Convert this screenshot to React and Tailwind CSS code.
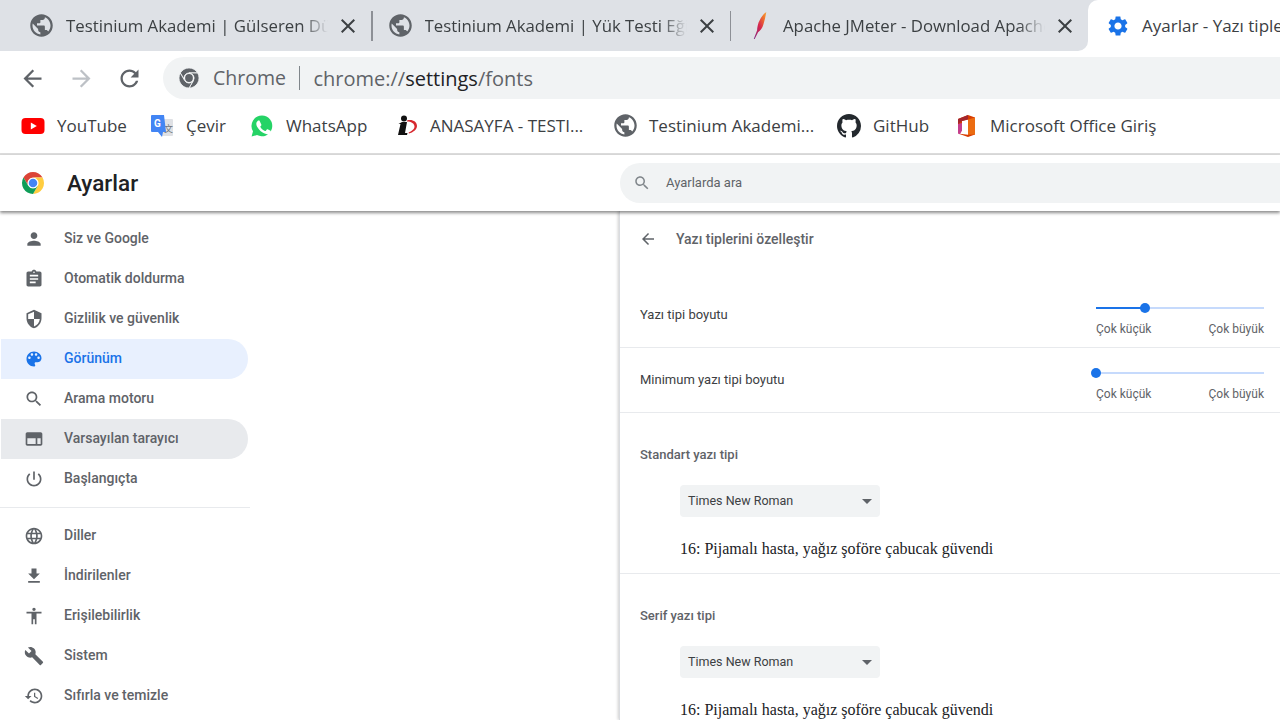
import React from "react";

const ICONS = {
    person: "M12 12c2.21 0 4-1.79 4-4s-1.79-4-4-4-4 1.79-4 4 1.79 4 4 4zm0 2c-2.67 0-8 1.34-8 4v2h16v-2c0-2.66-5.33-4-8-4z",
    assignment: "M19 3h-4.18C14.4 1.84 13.3 1 12 1c-1.3 0-2.4.84-2.82 2H5c-1.1 0-2 .9-2 2v14c0 1.1.9 2 2 2h14c1.1 0 2-.9 2-2V5c0-1.1-.9-2-2-2zm-7 0c.55 0 1 .45 1 1s-.45 1-1 1-1-.45-1-1 .45-1 1-1zm2 14H7v-2h7v2zm3-4H7v-2h10v2zm0-4H7V7h10v2z",
    security: "M12 1L3 5v6c0 5.55 3.84 10.74 9 12 5.16-1.26 9-6.45 9-12V5l-9-4zm0 10.99h7c-.53 4.12-3.28 7.79-7 8.94V12H5V6.3l7-3.11v8.8z",
    palette: "M12 3c-4.97 0-9 4.03-9 9s4.03 9 9 9c.83 0 1.5-.67 1.5-1.5 0-.39-.15-.74-.39-1.01-.23-.26-.38-.61-.38-.99 0-.83.67-1.5 1.5-1.5H16c2.76 0 5-2.24 5-5 0-4.42-4.03-8-9-8zm-5.5 9c-.83 0-1.5-.67-1.5-1.5S5.67 9 6.5 9 8 9.67 8 10.5 7.33 12 6.5 12zm3-4C8.67 8 8 7.33 8 6.5S8.67 5 9.5 5s1.5.67 1.5 1.5S10.33 8 9.5 8zm5 0c-.83 0-1.5-.67-1.5-1.5S13.67 5 14.5 5s1.5.67 1.5 1.5S15.33 8 14.5 8zm3 4c-.83 0-1.5-.67-1.5-1.5S16.67 9 17.5 9s1.5.67 1.5 1.5-.67 1.5-1.5 1.5z",
    search: "M15.5 14h-.79l-.28-.27C15.41 12.59 16 11.11 16 9.5 16 5.91 13.09 3 9.5 3S3 5.91 3 9.5 5.91 16 9.5 16c1.61 0 3.09-.59 4.23-1.57l.27.28v.79l5 4.99L20.49 19l-4.99-5zm-6 0C7.01 14 5 11.99 5 9.5S7.01 5 9.5 5 14 7.01 14 9.5 11.99 14 9.5 14z",
    web: "M20 4H4c-1.1 0-2 .9-2 2v12c0 1.1.9 2 2 2h16c1.1 0 2-.9 2-2V6c0-1.1-.9-2-2-2zM4 18v-7h10v7H4zm16 0h-4v-7h4v7z",
    power: "M13 3h-2v10h2V3zm4.83 2.17l-1.42 1.42C17.99 7.86 19 9.81 19 12c0 3.87-3.13 7-7 7s-7-3.13-7-7c0-2.19 1.01-4.14 2.58-5.42L6.17 5.17C4.23 6.82 3 9.26 3 12c0 4.97 4.03 9 9 9s9-4.03 9-9c0-2.74-1.23-5.18-3.17-6.83z",
    language: "M11.99 2C6.47 2 2 6.48 2 12s4.47 10 9.99 10C17.52 22 22 17.52 22 12S17.52 2 11.99 2zm6.93 6h-2.95c-.32-1.25-.78-2.45-1.38-3.56 1.84.63 3.37 1.91 4.33 3.56zM12 4.04c.83 1.2 1.48 2.53 1.91 3.96h-3.82c.43-1.43 1.08-2.76 1.91-3.96zM4.26 14C4.1 13.36 4 12.69 4 12s.1-1.36.26-2h3.38c-.08.66-.14 1.32-.14 2 0 .68.06 1.34.14 2H4.26zm.82 2h2.95c.32 1.25.78 2.45 1.38 3.56-1.84-.63-3.37-1.9-4.33-3.56zm2.95-8H5.08c.96-1.66 2.49-2.93 4.33-3.56C8.81 5.55 8.35 6.75 8.03 8zM12 19.96c-.83-1.2-1.48-2.53-1.91-3.96h3.82c-.43 1.43-1.08 2.76-1.91 3.96zM14.34 14H9.66c-.09-.66-.16-1.32-.16-2 0-.68.07-1.35.16-2h4.68c.09.65.16 1.32.16 2 0 .68-.07 1.34-.16 2zm.25 5.56c.6-1.11 1.06-2.31 1.38-3.56h2.95c-.96 1.65-2.49 2.93-4.33 3.56zM16.36 14c.08-.66.14-1.32.14-2 0-.68-.06-1.34-.14-2h3.38c.16.64.26 1.31.26 2s-.1 1.36-.26 2h-3.38z",
    download: "M19 9h-4V3H9v6H5l7 7 7-7zM5 18v2h14v-2H5z",
    accessibility: "M12 2c1.1 0 2 .9 2 2s-.9 2-2 2-2-.9-2-2 .9-2 2-2zm9 7h-6v13h-2v-6h-2v6H9V9H3V7h18v2z",
    build: "M22.7 19l-9.1-9.1c.9-2.3.4-5-1.5-6.9-2-2-5-2.4-7.4-1.3L9 6 6 9 1.6 4.7C.4 7.1.9 10.1 2.9 12.1c1.9 1.9 4.6 2.4 6.9 1.5l9.1 9.1c.4.4 1 .4 1.4 0l2.3-2.3c.5-.4.5-1.1.1-1.4z",
    restore: "M13 3c-4.97 0-9 4.03-9 9H1l3.89 3.89.07.14L9 12H6c0-3.87 3.13-7 7-7s7 3.13 7 7-3.13 7-7 7c-1.93 0-3.68-.79-4.94-2.06l-1.42 1.42C8.27 19.99 10.51 21 13 21c4.97 0 9-4.03 9-9s-4.03-9-9-9zm-1 5v5l4.28 2.54.72-1.21-3.5-2.08V8H12z",
    back: "M20 11H7.83l5.59-5.59L12 4l-8 8 8 8 1.41-1.41L7.83 13H20v-2z",
    forward: "M4 13h12.17l-5.59 5.59L12 20l8-8-8-8-1.41 1.41L16.17 11H4v2z",
    reload: "M17.65 6.35C16.2 4.9 14.21 4 12 4c-4.42 0-7.99 3.58-7.99 8s3.57 8 7.99 8c3.73 0 6.84-2.55 7.73-6h-2.08c-.82 2.33-3.04 4-5.65 4-3.31 0-6-2.69-6-6s2.69-6 6-6c1.66 0 3.14.69 4.22 1.78L13 11h7V4l-2.35 2.35z",
    close: "M19 6.41L17.59 5 12 10.59 6.41 5 5 6.41 10.59 12 5 17.59 6.41 19 12 13.41 17.59 19 19 17.59 13.41 12z",
    gear: "M19.14 12.94c.04-.3.06-.61.06-.94 0-.32-.02-.64-.07-.94l2.03-1.58c.18-.14.23-.41.12-.61l-1.92-3.32c-.12-.22-.37-.29-.59-.22l-2.39.96c-.5-.38-1.03-.7-1.62-.94l-.36-2.54c-.04-.24-.24-.41-.48-.41h-3.84c-.24 0-.43.17-.47.41l-.36 2.54c-.59.24-1.13.57-1.62.94l-2.39-.96c-.22-.08-.47 0-.59.22L2.74 8.87c-.12.21-.08.47.12.61l2.03 1.58c-.05.3-.09.63-.09.94s.02.64.07.94l-2.03 1.58c-.18.14-.23.41-.12.61l1.92 3.32c.12.22.37.29.59.22l2.39-.96c.5.38 1.03.7 1.62.94l.36 2.54c.05.24.24.41.48.41h3.84c.24 0 .44-.17.47-.41l.36-2.54c.59-.24 1.13-.56 1.62-.94l2.39.96c.22.08.47 0 .59-.22l1.92-3.32c.12-.22.07-.47-.12-.61l-2.01-1.58zM12 15.6c-1.98 0-3.6-1.62-3.6-3.6s1.62-3.6 3.6-3.6 3.6 1.62 3.6 3.6-1.62 3.6-3.6 3.6z",
    globe: "M12 2C6.48 2 2 6.48 2 12s4.48 10 10 10 10-4.48 10-10S17.52 2 12 2zm-1 17.93c-3.95-.49-7-3.85-7-7.93 0-.62.08-1.21.21-1.79L9 15v1c0 1.1.9 2 2 2v1.93zm6.9-2.54c-.26-.81-1-1.39-1.9-1.39h-1v-3c0-.55-.45-1-1-1H8v-2h2c.55 0 1-.45 1-1V7h2c1.1 0 2-.9 2-2v-.41c2.93 1.19 5 4.06 5 7.41 0 2.08-.8 3.97-2.1 5.39z",
};

const MatIcon = ({ name, className }) => (
    <svg viewBox="0 0 24 24" className={className} fill="currentColor">
        <path d={ICONS[name]} />
    </svg>
);

// Chrome logo, colored or flat gray for the omnibox
const ChromeLogo = ({ className, gray }) => {
    const stroke = gray ? "#f1f3f4" : "none";
    return (
        <svg viewBox="0 0 48 48" className={className}>
            <circle cx="24" cy="24" r="12" fill="#fff" />
            <path d="M4.95 13A22 22 0 0 1 43.05 13H24A11 11 0 0 0 14.47 29.5z" fill={gray ? "#5f6368" : "#db4437"} stroke={stroke} strokeWidth="2" />
            <path d="M43.05 13A22 22 0 0 1 24 46L33.53 29.5A11 11 0 0 0 24 13z" fill={gray ? "#5f6368" : "#ffcd40"} stroke={stroke} strokeWidth="2" />
            <path d="M24 46A22 22 0 0 1 4.95 13L14.47 29.5A11 11 0 0 0 33.53 29.5z" fill={gray ? "#5f6368" : "#0f9d58"} stroke={stroke} strokeWidth="2" />
            <circle cx="24" cy="24" r="8.5" fill={gray ? "#5f6368" : "#4285f4"} />
        </svg>
    );
};

const Feather = ({ className }) => (
    <svg viewBox="0 0 24 28" className={className}>
        <defs>
            <linearGradient id="feather" x1="0" y1="1" x2="1" y2="0">
                <stop offset="0" stopColor="#7b2b86" />
                <stop offset="0.45" stopColor="#d4234f" />
                <stop offset="0.8" stopColor="#f0762c" />
                <stop offset="1" stopColor="#f5a83a" />
            </linearGradient>
        </defs>
        <path d="M18 0c-3 2-6 6-8 11-1 3-1.500 6-1.500 8L5 28l.8.3 3.700-7.300c2.500-1.500 4.500-4.500 5.500-8 1-3.500 2.500-9 3-13z" fill="url(#feather)" />
    </svg>
);

const YouTubeIcon = () => (
    <svg viewBox="0 0 24 24" className="w-[24px] h-[24px] shrink-0">
        <rect x="0.5" y="4" width="23" height="16" rx="4" fill="#f00" />
        <path d="M9.8 8.6l6 3.4-6 3.4z" fill="#fff" />
    </svg>
);

const TranslateIcon = () => (
    <svg viewBox="0 0 24 24" className="w-[24px] h-[24px] shrink-0">
        <rect x="11" y="5" width="12" height="17" rx="1" fill="#dfe1e5" />
        <text x="14" y="18" fontSize="9" fill="#70757a" fontFamily="'Noto Sans CJK SC', sans-serif">文</text>
        <path d="M2 1h12l2 17h-3l-1 5-4-5H2a1 1 0 0 1-1-1V2a1 1 0 0 1 1-1z" fill="#4285f4" />
        <text x="4" y="13" fontSize="10" fontWeight="700" fill="#fff" fontFamily="Roboto, sans-serif">G</text>
    </svg>
);

const WhatsAppIcon = () => (
    <svg viewBox="0 0 24 24" className="w-[24px] h-[24px] shrink-0">
        <path d="M12 1.5A10.4 10.4 0 0 0 3 17.2L1.6 22.5l5.4-1.4A10.4 10.4 0 1 0 12 1.5z" fill="#25d366" />
        <path d="M8.6 6.6c-.3 0-.7.1-1 .5-.4.4-1.300 1.300-1.300 3s1.300 3.500 1.500 3.700c.2.300 2.500 4 6.200 5.400 3 1.200 3.600.9 4.300.9.600-.1 2-.8 2.300-1.600.3-.8.300-1.400.2-1.600-.1-.1-.3-.2-.7-.4l-2.500-1.200c-.3-.1-.6-.2-.8.200l-1.100 1.400c-.2.200-.4.300-.8.100-1.900-.9-3.200-1.700-4.500-3.900-.2-.4 0-.6.200-.8l.8-1c.1-.2.100-.4 0-.6L9.800 7.300c-.3-.7-.6-.7-.8-.7z" fill="#fff" />
    </svg>
);

const AnasayfaIcon = () => (
    <svg viewBox="0 0 24 24" className="w-[24px] h-[24px] shrink-0">
        <circle cx="10" cy="4.500" r="3" fill="#111" />
        <path d="M8 8h5l-2 11h2.500l-.5 2H4l2.500-11H4.500z" fill="#111" />
        <path d="M13 6.500c5-1.500 10 1 10 5.500 0 3.500-4 6.500-8 7.500l-.5-.8c3-1.500 6-3.500 6-6.200 0-3-3.500-5-7.500-5z" fill="#d7282f" />
    </svg>
);

const GitHubIcon = () => (
    <svg viewBox="0 0 16 16" className="w-[24px] h-[24px] shrink-0" fill="#24292e">
        <path d="M8 0C3.58 0 0 3.58 0 8c0 3.54 2.29 6.53 5.47 7.59.4.07.55-.17.55-.38 0-.19-.01-.82-.01-1.49-2.01.37-2.53-.49-2.69-.94-.09-.23-.48-.94-.82-1.13-.28-.15-.68-.52-.01-.53.63-.01 1.08.58 1.23.82.72 1.21 1.87.87 2.33.66.07-.52.28-.87.51-1.07-1.78-.2-3.64-.89-3.64-3.95 0-.87.31-1.59.82-2.15-.08-.2-.36-1.02.08-2.12 0 0 .67-.21 2.2.82.64-.18 1.32-.27 2-.27.68 0 1.36.09 2 .27 1.53-1.04 2.2-.82 2.2-.82.44 1.1.16 1.92.08 2.12.51.56.82 1.27.82 2.15 0 3.07-1.87 3.75-3.65 3.95.29.25.54.73.54 1.48 0 1.07-.01 1.93-.01 2.2 0 .21.15.46.55.38A8.013 8.013 0 0016 8c0-4.42-3.58-8-8-8z" />
    </svg>
);

const OfficeIcon = () => (
    <svg viewBox="0 0 24 24" className="w-[24px] h-[24px] shrink-0">
        <path d="M14 1l7 2.500v17L14 23l-10-3.500 10 1.200V5.500L8 7v9.500l-4 3V5z" fill="#d83b01" />
        <path d="M14 1L4 5v5l4-3 6-1.500z" fill="#a4262c" />
        <path d="M4 10v9.500l2 .7 2-3.700V9z" fill="#c43e8c" />
        <path d="M14 5.500v15.200l7-.2V3.500z" fill="#eb6c12" />
    </svg>
);

const GlobeIcon = () => <MatIcon name="globe" className="w-[27px] h-[27px] shrink-0 text-[#5f6368]" />;

const tabs = [
    { title: "Testinium Akademi | Gülseren Düzgün", icon: <GlobeIcon />, sep: true },
    { title: "Testinium Akademi | Yük Testi Eğitimi", icon: <GlobeIcon />, sep: true },
    { title: "Apache JMeter - Download Apache JMeter", icon: <Feather className="w-[27px] h-[27px] shrink-0 ml-[2px] -mr-[2px]" />, sep: false },
];

const bookmarks = [
    { label: "YouTube", icon: <YouTubeIcon />, width: "w-[129px]" },
    { label: "Çevir", icon: <TranslateIcon />, width: "w-[100px]" },
    { label: "WhatsApp", icon: <WhatsAppIcon />, width: "w-[144px]" },
    { label: "ANASAYFA - TESTI...", icon: <AnasayfaIcon />, width: "w-[219px]" },
    { label: "Testinium Akademi...", icon: <MatIcon name="globe" className="w-[27px] h-[27px] -mx-[1.5px] shrink-0 text-[#5f6368]" />, width: "w-[224px]" },
    { label: "GitHub", icon: <GitHubIcon />, width: "w-[117px]" },
    { label: "Microsoft Office Giriş", icon: <OfficeIcon />, width: "w-[220px]" },
];

const navTop = [
    { label: "Siz ve Google", icon: "person" },
    { label: "Otomatik doldurma", icon: "assignment" },
    { label: "Gizlilik ve güvenlik", icon: "security" },
    { label: "Görünüm", icon: "palette", selected: true },
    { label: "Arama motoru", icon: "search" },
    { label: "Varsayılan tarayıcı", icon: "web", hovered: true },
    { label: "Başlangıçta", icon: "power" },
];

const navBottom = [
    { label: "Diller", icon: "language" },
    { label: "İndirilenler", icon: "download" },
    { label: "Erişilebilirlik", icon: "accessibility" },
    { label: "Sistem", icon: "build" },
    { label: "Sıfırla ve temizle", icon: "restore" },
];

const Tab = ({ title, icon, sep }) => (
    <div className="w-[358.5px] shrink-0 h-full flex items-center pl-[14px] relative">
        {icon}
        <span className="ml-[11px] w-[262px] shrink-0 overflow-hidden whitespace-nowrap text-[16.8px] text-[#3c4043] [mask-image:linear-gradient(to_right,black_90%,transparent)]">
            {title}
        </span>
        <MatIcon name="close" className="ml-[8px] w-[24px] h-[24px] shrink-0 text-[#3c4043]" />
        {sep && <div className="absolute right-0 top-[11px] h-[30px] w-[1.5px] bg-[#8d9096]" />}
    </div>
);

const NavItem = ({ label, icon, selected, hovered }) => (
    <div
        className={`ml-[1px] w-[247px] h-[40px] flex items-center pl-[23px] rounded-r-[20px] text-[14px] font-medium ${
            selected ? "bg-[#e8f0fe] text-[#1a73e8]" : hovered ? "bg-[#e8eaed] text-[#5f6368]" : "text-[#5f6368]"
        }`}
    >
        <MatIcon name={icon} className="w-[20px] h-[20px] shrink-0" />
        <span className="ml-[20px] pb-[2px]">{label}</span>
    </div>
);

const SliderRow = ({ label, value }) => (
    <div className="h-[65px] border-b border-[#e8eaed] flex justify-between pl-[20px] pr-[16px]">
        <div className="flex items-center text-[13px] text-[#3c4043]">{label}</div>
        <div className="w-[168px] pt-[19px]">
            <div className="relative h-[2px] mt-[5px] bg-[#c6dafc]">
                <div className="h-full bg-[#1a73e8]" style={{ width: value }} />
                <div className="absolute top-[-4px] w-[10px] h-[10px] rounded-full bg-[#1a73e8]" style={{ left: `calc(${value} - 5px)` }} />
            </div>
            <div className="flex justify-between mt-[12px] text-[12px] leading-[16px] text-[#5f6368]">
                <span>Çok küçük</span>
                <span>Çok büyük</span>
            </div>
        </div>
    </div>
);

const FontSection = ({ label }) => (
    <div className="h-[161px] border-b border-[#e8eaed] pl-[20px] pt-[34px]">
        <div className="text-[13px] leading-[16px] font-medium text-[#5f6368]">{label}</div>
        <div className="ml-[40px] mt-[22px] w-[200px] h-[32px] rounded-[4px] bg-[#f1f3f4] flex items-center justify-between pl-[8px] pr-[8px] text-[12.5px] text-[#3c4043]">
            <span>Times New Roman</span>
            <div className="w-0 h-0 border-x-[5px] border-x-transparent border-t-[5px] border-t-[#5f6368]" />
        </div>
        <div className="ml-[40px] mt-[22px] font-['Liberation_Serif',serif] text-[16px] leading-[20px] text-[#202124]">
            16: Pijamalı hasta, yağız şoföre çabucak güvendi
        </div>
    </div>
);

const App = () => {
    return (
        <div className="w-[1280px] h-[720px] overflow-hidden bg-white font-['Roboto',sans-serif] flex flex-col">
            {/* Tab strip */}
            <div className="h-[51px] shrink-0 flex font-['Open_Sans',sans-serif]">
                <div className="w-[1088px] shrink-0 h-full bg-[#dee1e6] rounded-br-[10px] flex overflow-hidden pl-[14px]">
                    {tabs.map((tab) => (
                        <Tab key={tab.title} {...tab} />
                    ))}
                </div>
                <div className="flex-1 bg-[#dee1e6]">
                    <div className="h-full bg-white rounded-tl-[10px] flex items-center pl-[18px] whitespace-nowrap">
                        <MatIcon name="gear" className="w-[24px] h-[24px] shrink-0 text-[#1a73e8]" />
                        <span className="ml-[12px] text-[17px] text-[#3c4043]">Ayarlar - Yazı tipleri</span>
                    </div>
                </div>
            </div>

            {/* Toolbar */}
            <div className="h-[48px] shrink-0 flex items-end font-['Open_Sans',sans-serif]">
                <div className="flex items-center h-[42px] pl-[19px]">
                    <MatIcon name="back" className="w-[27px] h-[27px] text-[#5f6368]" />
                    <MatIcon name="forward" className="ml-[22px] w-[27px] h-[27px] text-[#bdc1c6]" />
                    <MatIcon name="reload" className="ml-[21px] w-[27px] h-[27px] text-[#5f6368]" />
                </div>
                <div className="ml-[20px] flex-1 h-[42px] bg-[#f1f3f4] rounded-l-[21px] flex items-center pl-[15px]">
                    <ChromeLogo gray className="w-[22px] h-[22px]" />
                    <span className="ml-[13px] text-[19.5px] text-[#5f6368]">Chrome</span>
                    <div className="ml-[13px] h-[24px] w-[1.5px] bg-[#80868b]" />
                    <span className="ml-[13px] pt-[1px] text-[20px] text-[#5f6368]">
                        chrome://<span className="text-[#202124]">settings</span>/fonts
                    </span>
                </div>
            </div>

            {/* Bookmarks */}
            <div className="h-[56px] shrink-0 border-b-2 border-[#dcdcdc] flex items-center pb-[1px] pl-[21px] font-['Open_Sans',sans-serif] text-[17px] text-[#3c4043] whitespace-nowrap">
                {bookmarks.map((b) => (
                    <div key={b.label} className={`flex items-center shrink-0 ${b.width}`}>
                        {b.icon}
                        <span className="ml-[12px]">{b.label}</span>
                    </div>
                ))}
            </div>

            {/* Settings header */}
            <div className="relative z-10 h-[56px] shrink-0 bg-white flex items-center shadow-[0_2px_3px_rgba(0,0,0,0.45)]">
                <div className="w-[620px] shrink-0 flex items-center pl-[21px]">
                    <ChromeLogo className="w-[24px] h-[24px]" />
                    <span className="ml-[22px] pt-[1px] text-[22.5px] font-medium text-[#202124]">Ayarlar</span>
                </div>
                <div className="flex-1 h-[40px] bg-[#f1f3f4] rounded-l-[20px] flex items-center pl-[13px]">
                    <MatIcon name="search" className="w-[18px] h-[18px] text-[#80868b]" />
                    <span className="ml-[15px] text-[13px] text-[#5f6368]">Ayarlarda ara</span>
                </div>
            </div>

            {/* Body */}
            <div className="flex-1 flex min-h-0">
                <div className="w-[619px] shrink-0 pt-[8px]">
                    {navTop.map((item) => (
                        <NavItem key={item.label} {...item} />
                    ))}
                    <div className="w-[250px] h-px bg-[#e8eaed] mt-[8px] mb-[8px]" />
                    {navBottom.map((item) => (
                        <NavItem key={item.label} {...item} />
                    ))}
                </div>
                <div className="flex-1 border-l border-[#dadce0] shadow-[-1px_0_3px_rgba(0,0,0,0.2)]">
                    <div className="h-[72px] flex items-start pl-[19px] pt-[19px]">
                        <MatIcon name="back" className="w-[18px] h-[18px] text-[#5f6368]" />
                        <span className="ml-[19px] text-[14px] leading-[18px] font-medium text-[#5f6368]">Yazı tiplerini özelleştir</span>
                    </div>
                    <SliderRow label="Yazı tipi boyutu" value="29%" />
                    <SliderRow label="Minimum yazı tipi boyutu" value="0%" />
                    <FontSection label="Standart yazı tipi" />
                    <FontSection label="Serif yazı tipi" />
                </div>
            </div>
        </div>
    );
};

export default App;
